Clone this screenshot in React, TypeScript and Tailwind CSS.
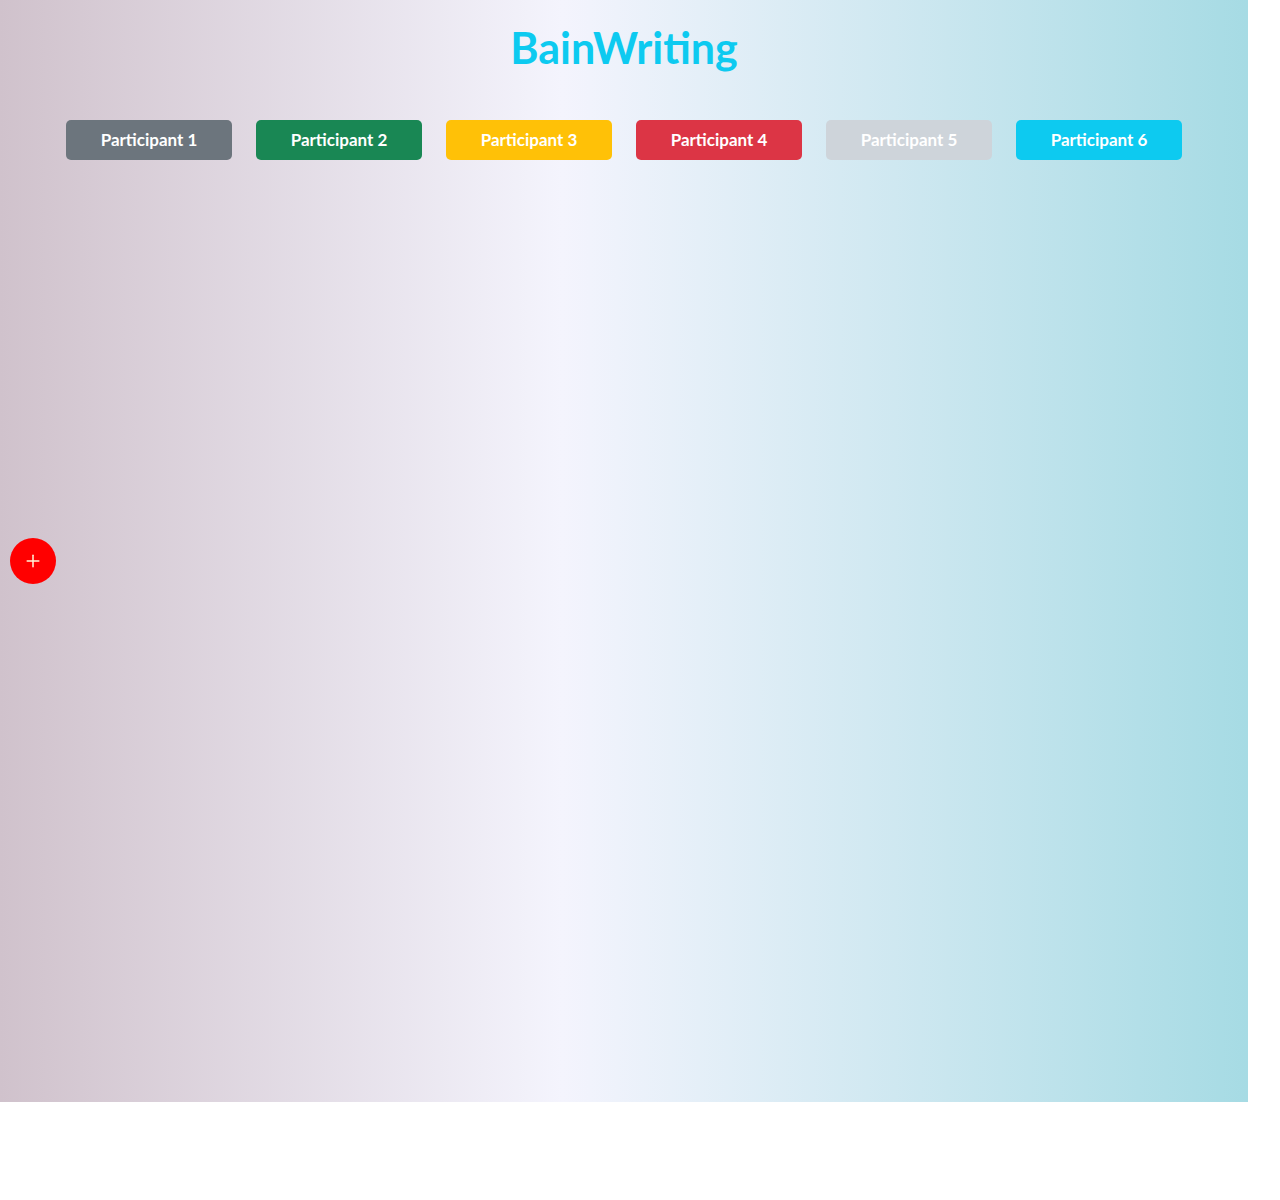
import { Plus } from "lucide-react";

/* ------------------ DATA ------------------ */
const participants = [
  { id: 1, label: "Participant 1", color: "bg-[#6c757d]" },
  { id: 2, label: "Participant 2", color: "bg-[#198754]" },
  { id: 3, label: "Participant 3", color: "bg-[#ffc107]" },
  { id: 4, label: "Participant 4", color: "bg-[#dc3545]" },
  { id: 5, label: "Participant 5", color: "bg-[#ced4da]" },
  { id: 6, label: "Participant 6", color: "bg-[#0dcaf0]" },
];

/* ------------------ COMPONENT ------------------ */
export default function App() {
  return (
    <div className="min-h-[1200px] bg-white font-['Lato','Noto_Sans',sans-serif]">
      <main className="relative w-[1248px] h-[1102px] bg-gradient-to-r from-[#d0c2cc] via-[#f4f4fd] via-45% to-[#a6dbe4]">
        {/* header */}
        <h1 className="pt-[22px] text-center text-[43px] leading-[52px] font-bold text-[#0dcaf0]">
          BainWriting
        </h1>

        {/* participant buttons */}
        <div className="mt-[46px] flex justify-center gap-6">
          {participants.map((p) => (
            <button
              key={p.id}
              className={`${p.color} w-[166px] h-10 rounded-[5px] text-white text-[17px] font-bold`}
            >
              {p.label}
            </button>
          ))}
        </div>

        {/* floating add button */}
        <button className="absolute left-[10px] top-[538px] w-[46px] h-[46px] rounded-full bg-[#ff0000] flex items-center justify-center text-[#fff6d8]">
          <Plus size={20} strokeWidth={1.8} />
        </button>
      </main>
    </div>
  );
}
